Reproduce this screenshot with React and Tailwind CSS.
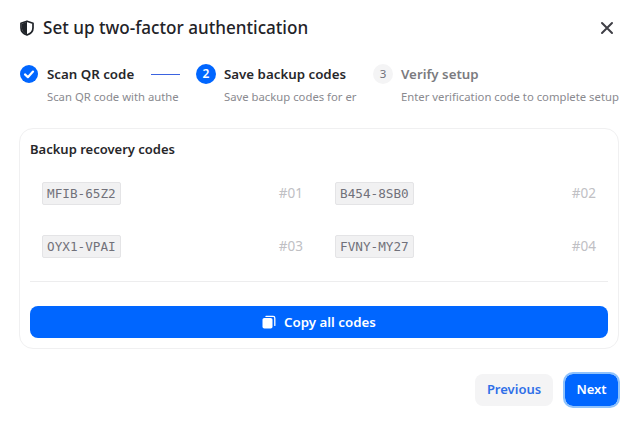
import React from "react";

const sans = "font-['Noto_Sans',sans-serif]";

function Shield() {
  return (
    <svg width="16" height="16" viewBox="0 0 16 16" className="shrink-0">
      <path d="M8 1.2 L14 3.2 V8 C14 11.4 11.4 13.8 8 15 C4.6 13.8 2 11.4 2 8 V3.2 Z" fill="none" stroke="#1f2328" strokeWidth="1.7" strokeLinejoin="round" />
      <path d="M8 1.8 V14.4 C5.2 13.4 2.8 11.2 2.8 8 V3.8 Z" fill="#1f2328" />
    </svg>
  );
}

function Step({ icon, title, desc, widthClass, titleClass, line }) {
  return (
    <div className={`flex gap-[8px] overflow-hidden shrink-0 ${widthClass}`}>
      {icon}
      <div className="min-w-0 flex-1">
        <div className="flex items-center h-[20px]">
          <span className={`text-[13.3px] leading-[20px] font-semibold whitespace-nowrap ${titleClass}`}>{title}</span>
          {line}
        </div>
        <div className="mt-[5px] text-[11.3px] leading-[16px] text-[#8a8a8f] whitespace-nowrap">{desc}</div>
      </div>
    </div>
  );
}

function Code({ code, n }) {
  return (
    <div className="flex items-center justify-between px-[12px] h-[46px]">
      <code className="font-['DejaVu_Sans_Mono',monospace] text-[12.7px] leading-[21px] px-[4px] bg-[#f1f1f2] border border-[#e4e4e6] rounded-[2px] text-[#71717a]">{code}</code>
      <span className="text-[13.5px] text-[#c0c0c4]">{n}</span>
    </div>
  );
}

export default function App() {
  return (
    <div className={`${sans} w-[637px] h-[424px] bg-white relative overflow-hidden px-[19px] pt-[16px]`}>
      <div className="flex items-center gap-[8px] h-[24px]">
        <Shield />
        <h1 className="text-[17.1px] leading-[24px] font-medium text-[#1f2328]">Set up two-factor authentication</h1>
      </div>
      <button className="absolute top-[20px] right-[22px] text-[#3f3f46]">
        <svg width="16" height="16" viewBox="0 0 16 16" fill="none" stroke="currentColor" strokeWidth="2" strokeLinecap="round" className="block">
          <path d="M3 3 L13 13 M13 3 L3 13" />
        </svg>
      </button>

      <div className="flex gap-[16px] mt-[24px] pl-[1px] h-[49px]">
        <Step
          widthClass="w-[160px]"
          titleClass="text-[#27272a]"
          title="Scan QR code"
          desc="Scan QR code with authe"
          icon={
            <svg width="18" height="18" viewBox="0 0 18 18" className="shrink-0 mt-[1px] mr-px">
              <circle cx="9" cy="9" r="9" fill="#0066ff" />
              <path d="M5 9.4 L7.9 12.2 L13 6.6" fill="none" stroke="#fff" strokeWidth="2.2" strokeLinecap="round" strokeLinejoin="round" />
            </svg>
          }
          line={<div className="ml-[17px] flex-1 h-px bg-[#3b63e0]" />}
        />
        <Step
          widthClass="w-[161px]"
          titleClass="text-[#27272a]"
          title="Save backup codes"
          desc="Save backup codes for er"
          icon={<div className="w-[20px] h-[20px] rounded-full bg-[#0066ff] text-white text-[12px] font-semibold flex items-center justify-center shrink-0">2</div>}
        />
        <Step
          widthClass="w-[246px]"
          titleClass="text-[#7b7b80]"
          title="Verify setup"
          desc="Enter verification code to complete setup"
          icon={<div className="w-[20px] h-[20px] rounded-full bg-[#f4f4f5] text-[#71717a] text-[11.5px] flex items-center justify-center shrink-0">3</div>}
        />
      </div>

      <div className="mt-[15px] w-[600px] h-[221px] rounded-[14px] border border-[#f0f0f1] px-[10px] pt-[10px]">
        <h2 className="text-[13px] leading-[20px] font-semibold text-[#27272a]">Backup recovery codes</h2>
        <div className="grid grid-cols-2 gap-x-[8px] gap-y-[7px] mt-[11px]">
          <Code code="MFIB-65Z2" n="#01" />
          <Code code="B454-8SB0" n="#02" />
          <Code code="OYX1-VPAI" n="#03" />
          <Code code="FVNY-MY27" n="#04" />
        </div>
        <div className="h-px bg-[#ededee] mt-[12px]" />
        <button className="mt-[24px] w-full h-[32px] rounded-[8px] bg-[#0066ff] text-white text-[13.3px] font-semibold flex items-center justify-center gap-[8px]">
          <svg width="14" height="14" viewBox="0 0 14 14" fill="#fff">
            <rect x="0.5" y="3" width="10" height="10.5" rx="1.8" />
            <path d="M4 1.4 H11.2 A1.6 1.6 0 0 1 12.8 3 V10.4" fill="none" stroke="#fff" strokeWidth="1.3" strokeLinecap="round" />
          </svg>
          <span className="relative top-px">Copy all codes</span>
        </button>
      </div>

      <div className="flex justify-end gap-[12px] mt-[25px]">
        <button className="w-[78px] h-[32px] rounded-[8px] bg-[#f4f4f5] text-[#2f6fe8] text-[13px] font-semibold">Previous</button>
        <button className="w-[53px] h-[32px] rounded-[8px] bg-[#0066ff] text-white text-[13px] font-semibold outline-2 outline-offset-0 outline-[#8fc2fb]">Next</button>
      </div>
    </div>
  );
}
